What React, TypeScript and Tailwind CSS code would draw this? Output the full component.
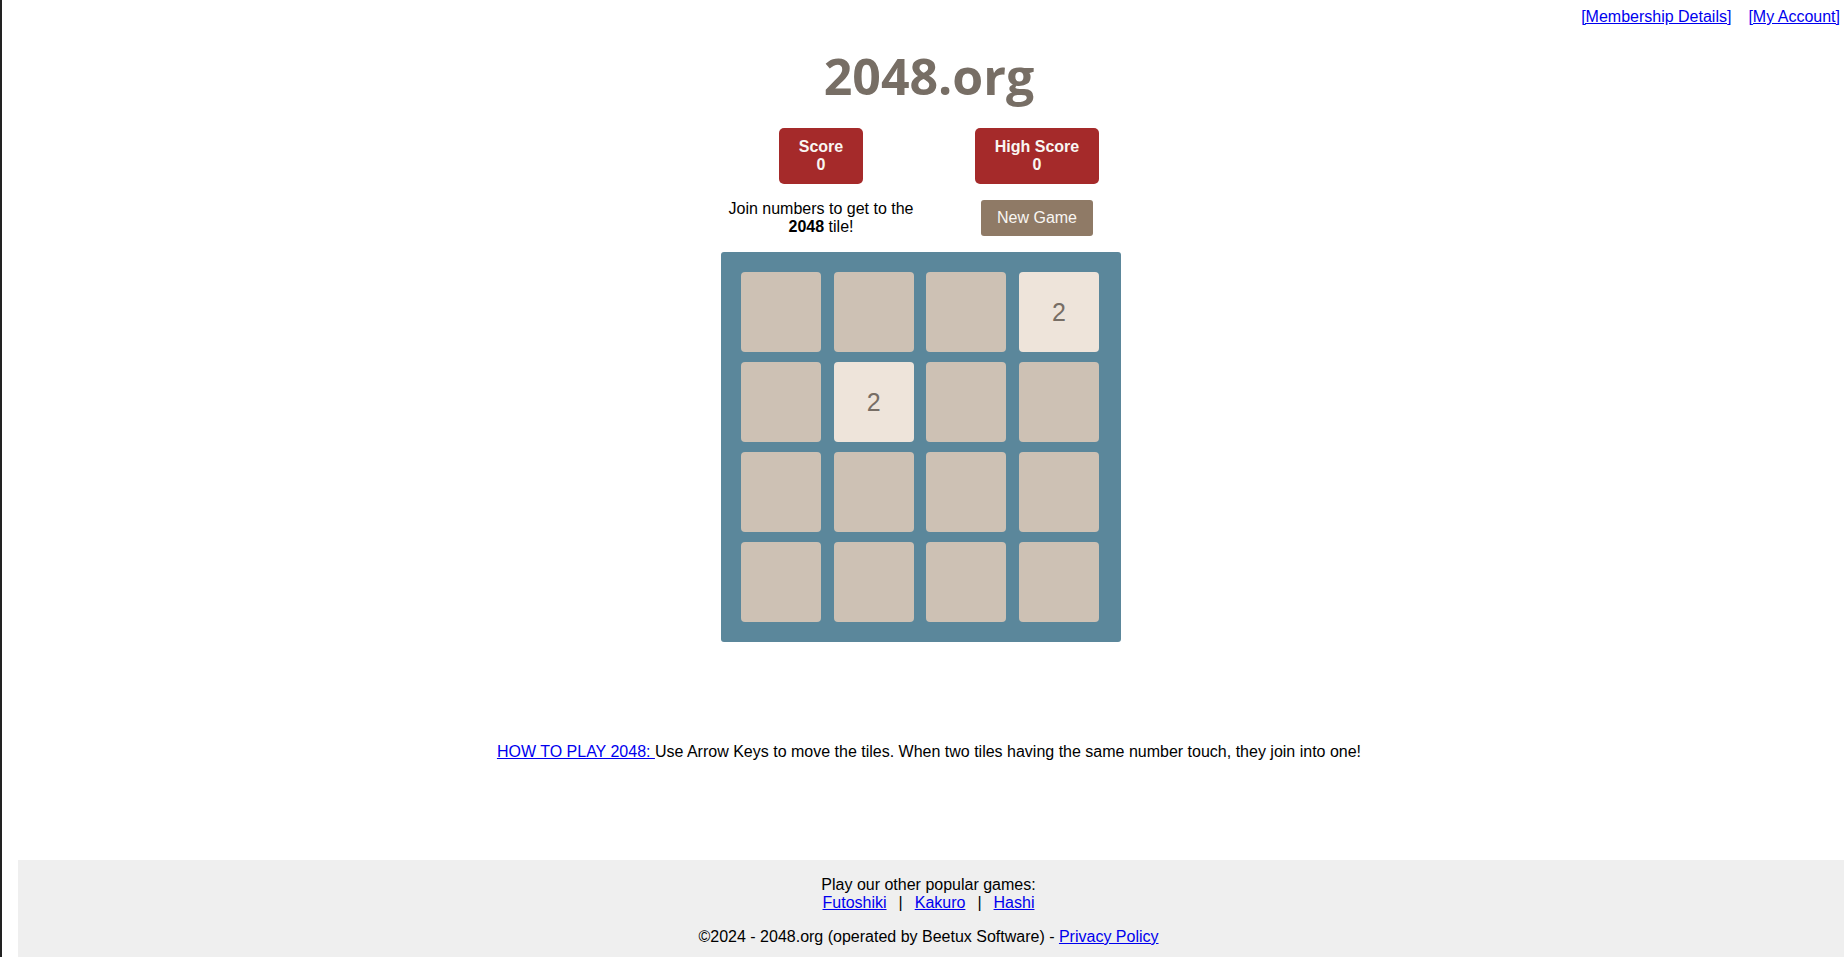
import React from "react";

const board = [
  [0, 0, 0, 2],
  [0, 2, 0, 0],
  [0, 0, 0, 0],
  [0, 0, 0, 0],
];

function Tile({ value }: { value: number }) {
  return (
    <div
      className={
        value
          ? "w-[80px] h-[80px] rounded-[4px] bg-[#eee4da] flex items-center justify-center text-[25px] text-[#776e65]"
          : "w-[80px] h-[80px] rounded-[4px] bg-[#cdc1b4]"
      }
    >
      {value ? value : ""}
    </div>
  );
}

export default function App() {
  return (
    <div className="flex min-h-[957px] bg-white font-['Liberation_Sans',Arial,sans-serif] text-[16px] leading-[18px] text-black">
      <div className="w-[2px] shrink-0 bg-[#222222]" />
      <div className="flex-1 flex flex-col pl-[16px]">
        {/* top links */}
        <div className="flex justify-end pt-[8px] pr-[4px] h-[26px]">
          <a href="#" className="text-[#0000ee] underline">[Membership Details]</a>
          <span className="w-[17px]" />
          <a href="#" className="text-[#0000ee] underline">[My Account]</a>
        </div>

        <div className="flex flex-col items-center pr-[4px]">
          <h1 className="mt-[24px] h-[52px] text-[50px] leading-[52px] font-bold text-[#776e65] font-['Open_Sans',sans-serif]">
            2048.org
          </h1>

          <div className="grid grid-cols-[216px_216px] mt-[26px]">
            <div className="flex justify-center">
              <div className="bg-[#a52a2a] text-[#f9f6f2] font-bold rounded-[5px] px-[20px] py-[10px] text-center">
                Score
                <br />0
              </div>
            </div>
            <div className="flex justify-center">
              <div className="bg-[#a52a2a] text-[#f9f6f2] font-bold rounded-[5px] px-[20px] py-[10px] text-center">
                High Score
                <br />0
              </div>
            </div>

            <div className="flex items-center justify-center text-center mt-[16px]">
              <p>
                Join numbers to get to the
                <br />
                <b>2048</b> tile!
              </p>
            </div>
            <div className="flex items-center justify-center mt-[16px]">
              <button className="bg-[#8f7a66] text-[#f9f6f2] rounded-[3px] w-[112px] h-[36px]">
                New Game
              </button>
            </div>
          </div>

          <div className="mt-[16px] mr-[16px] w-[400px] h-[390px] bg-[#5b879b] rounded-[3px] pt-[20px] pl-[20px] pr-[22px] grid grid-cols-[repeat(4,80px)] justify-between content-start gap-y-[10px]">
            {board.flat().map((v, i) => (
              <Tile key={i} value={v} />
            ))}
          </div>

          <p className="mt-[101px]">
            <a href="#" className="text-[#0000ee] underline">HOW TO PLAY 2048: </a>
            Use Arrow Keys to move the tiles. When two tiles having the same number touch, they join into one!
          </p>
        </div>

        <footer className="mt-[99px] bg-[#efefef] flex-1 flex flex-col items-center pt-[16px] pb-[12px] pr-[5px] text-center">
          <p>
            Play our other popular games:
            <br />
            <a href="#" className="text-[#0000ee] underline">Futoshiki</a>
            <span className="mx-[12px]">|</span>
            <a href="#" className="text-[#0000ee] underline">Kakuro</a>
            <span className="mx-[12px]">|</span>
            <a href="#" className="text-[#0000ee] underline">Hashi</a>
          </p>
          <p className="mt-[16px]">
            ©2024 - 2048.org (operated by Beetux Software) -{" "}
            <a href="#" className="text-[#0000ee] underline">Privacy Policy</a>
          </p>
        </footer>
      </div>
    </div>
  );
}
